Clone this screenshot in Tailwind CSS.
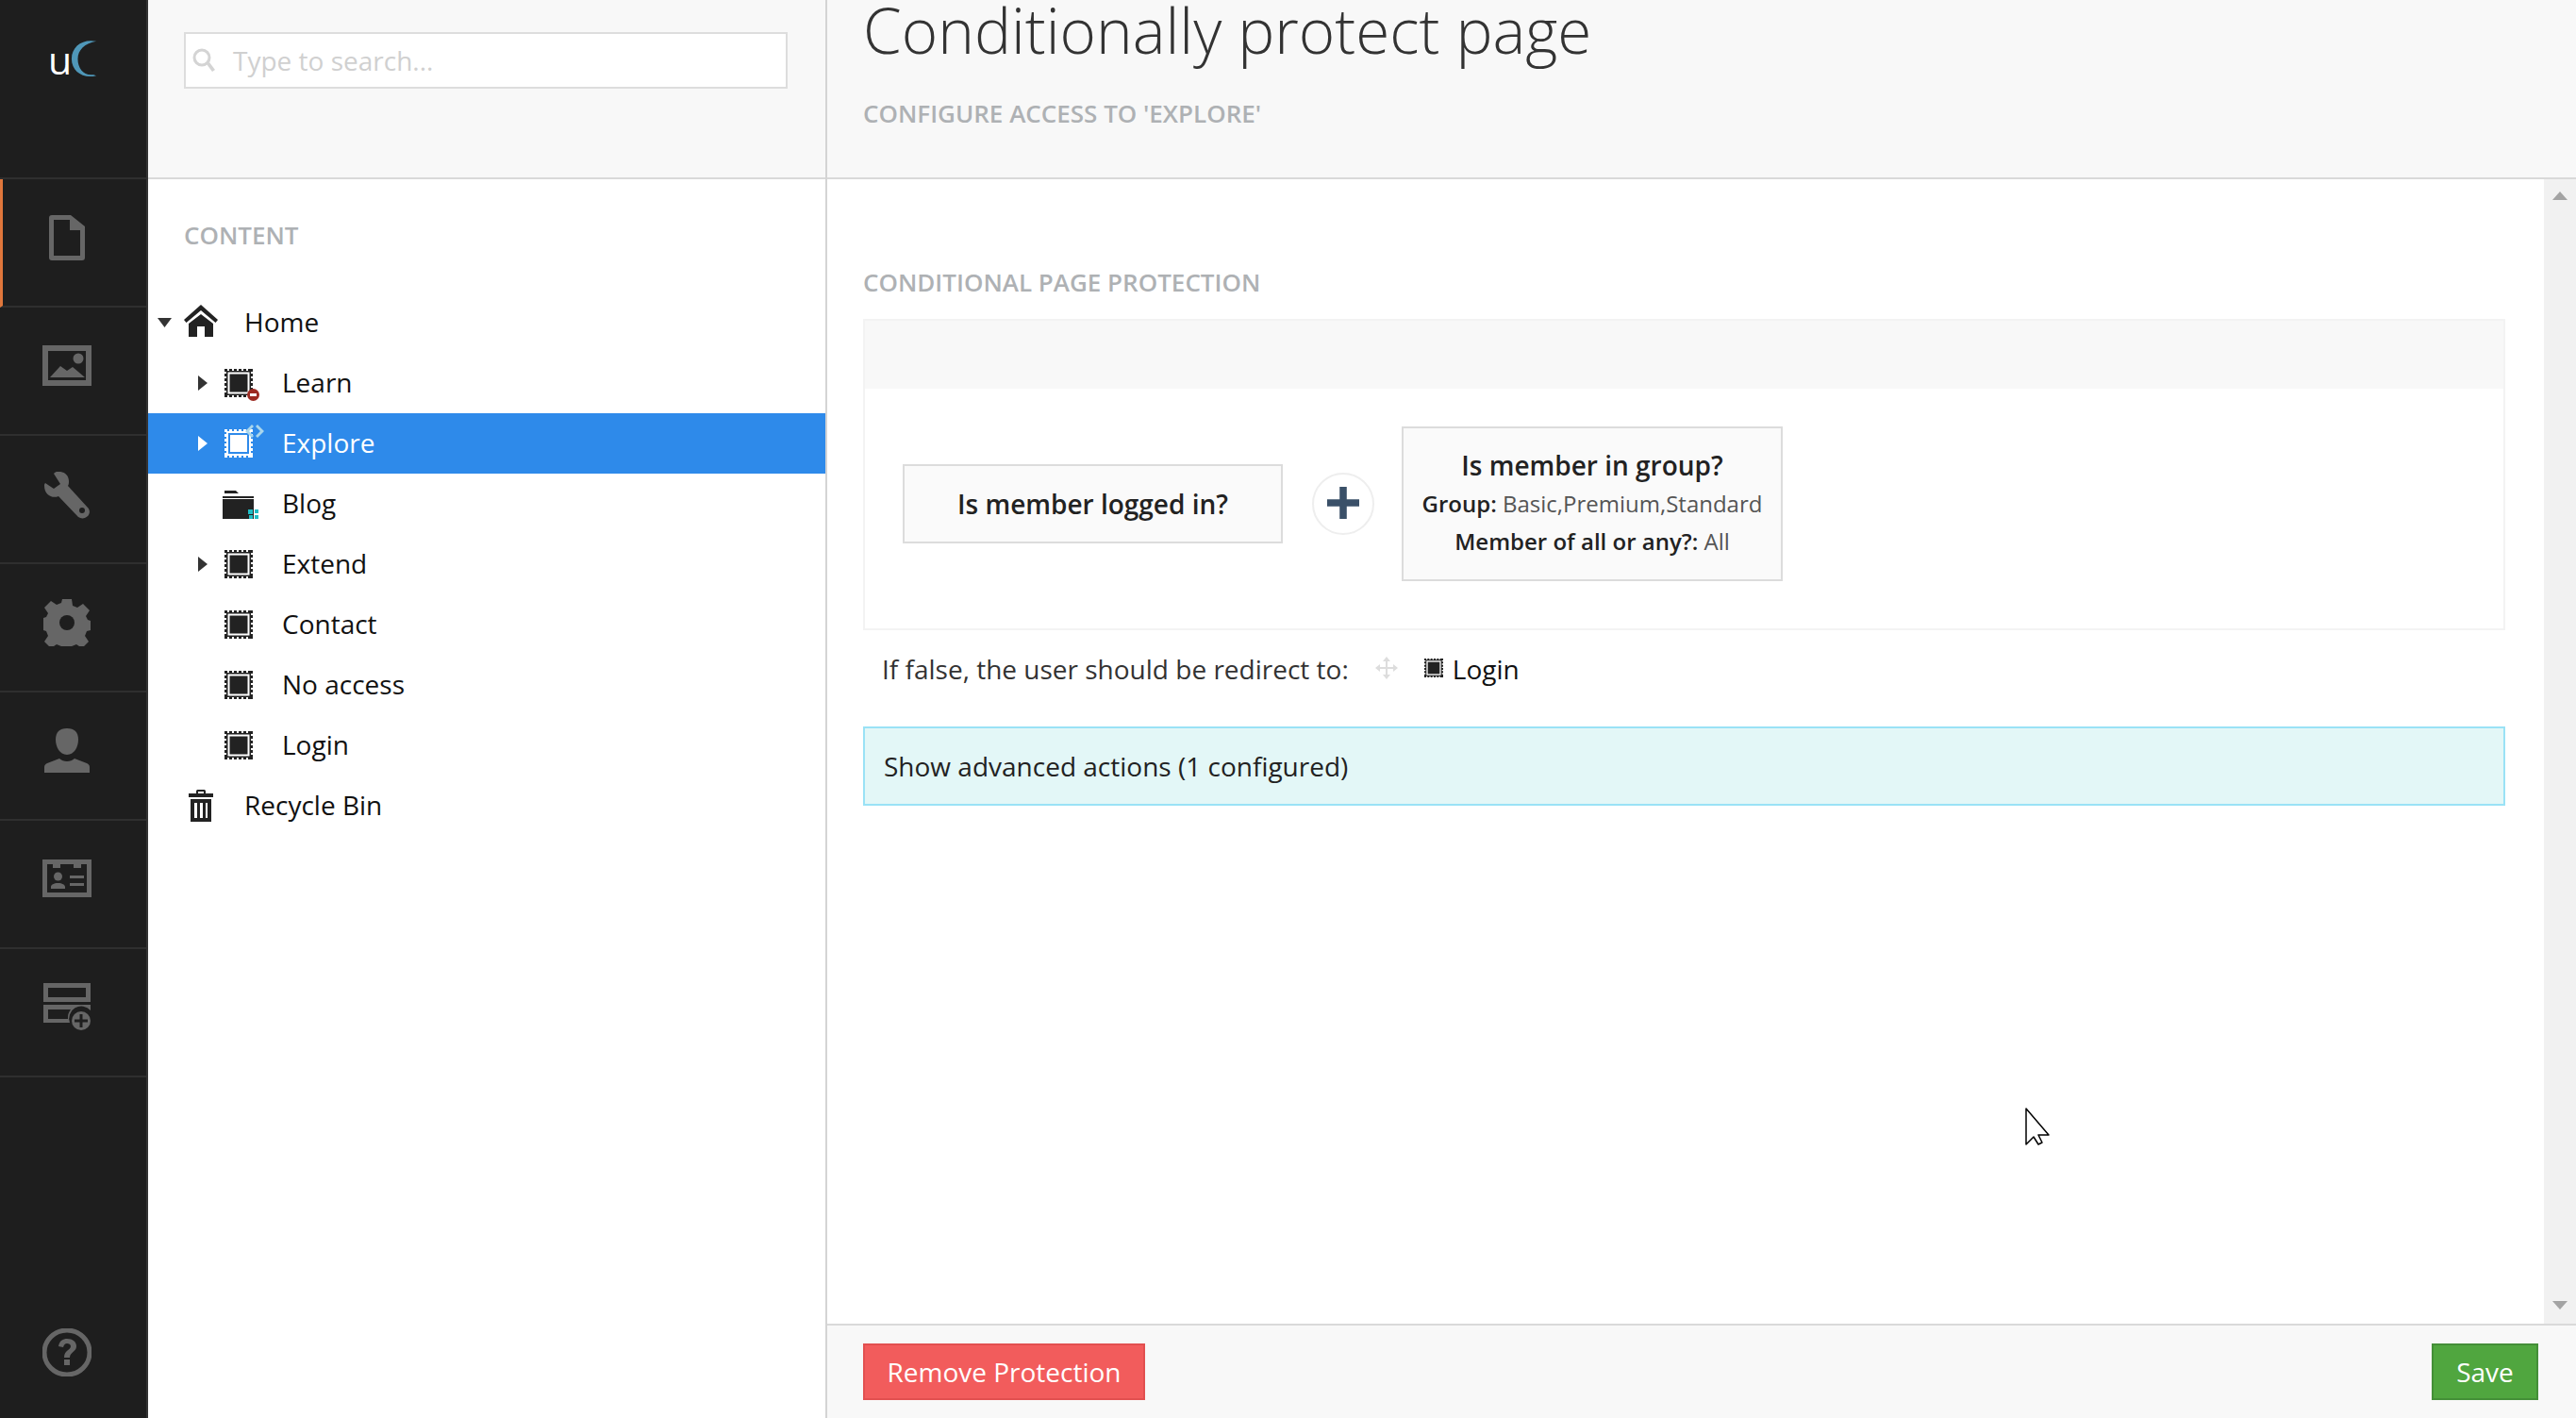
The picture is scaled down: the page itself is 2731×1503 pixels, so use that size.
<!DOCTYPE html>
<html lang="en">
  <head>
    <meta charset="UTF-8" />
    <title>Conditionally protect page</title>
    <script src="https://cdn.jsdelivr.net/npm/@tailwindcss/browser@4"></script>
  </head>
  <body class="h-screen overflow-hidden bg-white font-['Open_Sans',sans-serif] text-[#111]">
    <svg width="0" height="0" class="absolute">
      <defs>
        <symbol id="stamp" viewBox="0 0 30 30">
          <rect x="0" y="0" width="30" height="30" fill="#222" />
          <path d="M3 0h2v2H3zM8 0h2v2H8zM13 0h2v2h-2zM18 0h2v2h-2zM23 0h2v2h-2zM3 28h2v2H3zM8 28h2v2H8zM13 28h2v2h-2zM18 28h2v2h-2zM23 28h2v2h-2zM0 3h2v2H0zM0 8h2v2H0zM0 13h2v2H0zM0 18h2v2H0zM0 23h2v2H0zM28 3h2v2h-2zM28 8h2v2h-2zM28 13h2v2h-2zM28 18h2v2h-2zM28 23h2v2h-2z" fill="#fff" />
          <rect x="4.500" y="4.500" width="21" height="21" fill="#222" stroke="#fff" stroke-width="2" />
        </symbol>
        <symbol id="arrow" viewBox="0 0 10 16">
          <path d="M0 0l10 8-10 8z" fill="currentColor" />
        </symbol>
      </defs>
    </svg>

    <div class="flex h-full">
      <!-- Dark section nav -->
      <nav class="w-[157px] shrink-0 h-full flex flex-col bg-[#1e1e1e] border-r-2 border-[#333]">
        <div class="h-[190px] shrink-0 border-b-2 border-[#2f2f2f] pt-[41px] pl-[51px]">
          <div class="flex items-end">
            <span class="text-[41px] leading-[44px] text-white">u</span>
            <svg width="28" height="41" viewBox="0 0 30 42" class="mb-[2px] -ml-[1px]">
              <path d="M29 1C13 -2 1 7 1 21s13 23 28 19c-2-1-4-1-6-1C14 39 8 31 8 21 8 11 16 3 29 1z" fill="#4f97b8" />
            </svg>
          </div>
        </div>
        <div class="h-[136px] shrink-0 flex items-center justify-center border-l-[3px] border-l-[#e0773c] border-b-2 border-b-[#2f2f2f] pr-[16px] pb-[11px]">
          <svg width="40" height="50" viewBox="0 0 40 50">
            <path d="M4 1h20l15 12v33a3 3 0 0 1-3 3H4a3 3 0 0 1-3-3V4a3 3 0 0 1 3-3zm2 5v38h28V17H23V6z" fill="#666" fill-rule="evenodd" />
          </svg>
        </div>
        <div class="h-[136px] shrink-0 flex items-center justify-center border-b-2 border-[#2f2f2f] pr-[13px] pb-[11px]">
          <svg width="52" height="43" viewBox="0 0 52 43">
            <path d="M0 0h52v43H0zm6 6v31h40V6z" fill="#666" fill-rule="evenodd" />
            <circle cx="38" cy="14" r="5.500" fill="#666" />
            <path d="M8 34l11-12 7 5 6-4 13 11z" fill="#666" />
          </svg>
        </div>
        <div class="h-[136px] shrink-0 flex items-center justify-center border-b-2 border-[#2f2f2f] pr-[13px] pb-[8px]">
          <svg width="48" height="50" viewBox="0 0 48 50">
            <path d="M13 0c7-1 13 3 13 10 0 2 0 3-1 5l21 23c3 3 2 7 0 9-3 3-7 3-10 1L15 26c-7 3-15-2-15-11 0-1 0-2 1-3l9 6 7-5-7-11c1-1 2-2 3-2z" fill="#666" />
            <circle cx="40" cy="41" r="3" fill="#1e1e1e" />
          </svg>
        </div>
        <div class="h-[136px] shrink-0 flex items-center justify-center border-b-2 border-[#2f2f2f] pr-[13px] pb-[11px]">
          <svg width="50" height="50" viewBox="0 0 50 50">
            <path d="M20 0h10l1 7 5 2 6-4 7 7-4 6 2 4 3 1v10l-4 1-2 5 4 6-7 7-6-4-5 2-1 6H20l-1-6-5-2-6 4-7-7 4-6-2-5-3-1V20l3-1 2-4-4-6 7-7 6 4 5-2z" fill="#666" />
            <circle cx="25" cy="25" r="8" fill="#1e1e1e" />
          </svg>
        </div>
        <div class="h-[136px] shrink-0 flex items-center justify-center border-b-2 border-[#2f2f2f] pr-[13px] pb-[11px]">
          <svg width="48" height="47" viewBox="0 0 48 47">
            <path d="M24 0c8 0 12 4 12 12 0 7-4 16-12 16S12 19 12 12C12 4 16 0 24 0z" fill="#666" />
            <path d="M0 47v-6c0-2 1-3 3-4l13-5c4 4 12 4 16 0l13 5c2 1 3 2 3 4v6z" fill="#666" />
          </svg>
        </div>
        <div class="h-[136px] shrink-0 flex items-center justify-center border-b-2 border-[#2f2f2f] pr-[13px] pb-[12px]">
          <svg width="52" height="40" viewBox="0 0 52 40">
            <path d="M0 0h52v40H0zm5 5v30h42V5z" fill="#666" fill-rule="evenodd" />
            <path d="M11 4h8v5h-8zM33 4h8v5h-8z" fill="#666" />
            <circle cx="16.500" cy="18" r="4.500" fill="#666" />
            <path d="M9 31v-2c0-2 3-4 7.500-4s7.500 2 7.500 4v2zM29 17h15v3H29zM29 25h15v3H29z" fill="#666" />
          </svg>
        </div>
        <div class="h-[136px] shrink-0 flex items-center justify-center border-b-2 border-[#2f2f2f] pr-[13px] pb-[12px]">
          <svg width="50" height="50" viewBox="0 0 50 50">
            <path d="M0 0h50v20H0zm5 5v10h40V5zM0 23h50v6a13 13 0 0 0-22 13H0zm5 5v10h21a14 14 0 0 1 3-10z" fill="#666" fill-rule="evenodd" />
            <circle cx="40" cy="40" r="10" fill="#666" />
            <path d="M38.500 33h3v5.500H47v3h-5.500V47h-3v-5.500H33v-3h5.500z" fill="#1e1e1e" />
          </svg>
        </div>
        <div class="flex-1 flex items-end justify-center pb-[44px] pr-[13px]">
          <svg width="52" height="51" viewBox="0 0 52 51">
            <ellipse cx="26" cy="25.500" rx="24" ry="23.500" fill="none" stroke="#666" stroke-width="5" />
            <path d="M17 19c1-6 5-8 9-8 6 0 10 3 10 8 0 6-7 6-7 12h-6c0-8 7-8 7-12 0-2-2-3-4-3s-3 1-4 4z" fill="#666" />
            <rect x="23" y="33" width="6" height="6" fill="#666" />
          </svg>
        </div>
      </nav>

      <!-- Content tree -->
      <aside class="w-[718px] shrink-0 h-full flex flex-col">
        <div class="h-[190px] shrink-0 bg-[#f8f8f8] border-b-2 border-[#d9d9d9] pl-[38px] pr-[40px] pt-[34px]">
          <div class="h-[60px] bg-white border-2 border-[#ddd] flex items-center pl-[7px] gap-[17px]">
            <svg width="26" height="28" viewBox="0 0 26 28">
              <circle cx="10" cy="11" r="8" fill="none" stroke="#d4d4d4" stroke-width="3" />
              <path d="M15 18l3-2 6 8-3 2z" fill="#d4d4d4" />
            </svg>
            <span class="text-[28px] text-[#d0d0d0] mb-[1px]">Type to search...</span>
          </div>
        </div>
        <div class="pt-[40px]">
          <div class="pl-[38px] h-[47px] text-[26px] font-semibold text-[#aeb1b4]">CONTENT</div>
          <ul class="mt-[33px] text-[28px]">
            <li class="h-[64px] flex items-center">
              <svg width="15" height="10" viewBox="0 0 15 10" class="ml-[10px] text-[#333]"><path d="M0 0h15L7.500 10z" fill="currentColor" /></svg>
              <svg width="36" height="34" viewBox="0 0 36 34" class="ml-[13px] mb-[4px]">
                <path d="M18 0l18 16-2.500 3L18 6 2.500 19 0 16z" fill="#222" />
                <path d="M18 10l13 10v14H22V23h-8v11H5V20z" fill="#222" />
              </svg>
              <span class="ml-[28px] mb-[2px]">Home</span>
            </li>
            <li class="h-[64px] flex items-center pl-[53px]">
              <svg width="10" height="16" class="text-[#333]"><use href="#arrow" /></svg>
              <span class="relative ml-[18px]">
                <svg width="30" height="30" class="block"><use href="#stamp" /></svg>
                <svg width="13" height="13" viewBox="0 0 13 13" class="absolute -right-[7px] -bottom-[4px]">
                  <circle cx="6.500" cy="6.500" r="6.500" fill="#9c2b22" />
                  <rect x="3" y="5" width="7" height="3" fill="#fff" />
                </svg>
              </span>
              <span class="ml-[31px] mb-[2px]">Learn</span>
            </li>
            <li class="h-[64px] flex items-center pl-[53px] bg-[#2e8aea] text-white">
              <svg width="10" height="16"><use href="#arrow" /></svg>
              <span class="relative ml-[18px]">
                <svg width="30" height="30" viewBox="0 0 30 30" class="block">
                  <rect width="30" height="30" fill="#fff" />
                  <path d="M3 0h2v2H3zM8 0h2v2H8zM13 0h2v2h-2zM18 0h2v2h-2zM23 0h2v2h-2zM3 28h2v2H3zM8 28h2v2H8zM13 28h2v2h-2zM18 28h2v2h-2zM23 28h2v2h-2zM0 3h2v2H0zM0 8h2v2H0zM0 13h2v2H0zM0 18h2v2H0zM0 23h2v2H0zM28 3h2v2h-2zM28 8h2v2h-2zM28 13h2v2h-2zM28 18h2v2h-2zM28 23h2v2h-2z" fill="#2e8aea" />
                  <rect x="5" y="5" width="20" height="20" fill="#fff" stroke="#2e8aea" stroke-width="2" />
                </svg>
                <svg width="20" height="14" viewBox="0 0 20 14" class="absolute -right-[12px] -top-[5px]">
                  <path d="M7 0l2 2-5 5 5 5-2 2-7-7zM13 0l7 7-7 7-2-2 5-5-5-5z" fill="#a9d6ec" />
                </svg>
              </span>
              <span class="ml-[31px] mb-[2px]">Explore</span>
            </li>
            <li class="h-[64px] flex items-center pl-[79px]">
              <svg width="38" height="32" viewBox="0 0 38 32">
                <path d="M0 8h33v2H0zM2 2h12l3 3H2zM0 11h33v25H0z" fill="#222" />
                <path d="M27 22h5v5h-5zM34 22h4v4h-4zM28 28h4v4h-4zM34 28h4v4h-4z" fill="#1fbcc4" />
              </svg>
              <span class="ml-[25px] mb-[2px]">Blog</span>
            </li>
            <li class="h-[64px] flex items-center pl-[53px]">
              <svg width="10" height="16" class="text-[#333]"><use href="#arrow" /></svg>
              <svg width="30" height="30" class="ml-[18px]"><use href="#stamp" /></svg>
              <span class="ml-[31px] mb-[2px]">Extend</span>
            </li>
            <li class="h-[64px] flex items-center pl-[81px]">
              <svg width="30" height="30"><use href="#stamp" /></svg>
              <span class="ml-[31px] mb-[2px]">Contact</span>
            </li>
            <li class="h-[64px] flex items-center pl-[81px]">
              <svg width="30" height="30"><use href="#stamp" /></svg>
              <span class="ml-[31px] mb-[2px]">No access</span>
            </li>
            <li class="h-[64px] flex items-center pl-[81px]">
              <svg width="30" height="30"><use href="#stamp" /></svg>
              <span class="ml-[31px] mb-[2px]">Login</span>
            </li>
            <li class="h-[64px] flex items-center pl-[43px]">
              <svg width="26" height="34" viewBox="0 0 26 34">
                <path d="M8 4V1.500C8 .500 9 0 10 0h6c1 0 2 .500 2 1.500V4h8v4H0V4zm2 0h6V2h-6zM2 10h22v24H2zm4 4v16h3V14zm6 0v16h3V14zm6 0v16h2V14z" fill="#222" fill-rule="evenodd" />
              </svg>
              <span class="ml-[33px] mb-[2px]">Recycle Bin</span>
            </li>
          </ul>
        </div>
      </aside>

      <!-- Editor -->
      <main class="flex-1 min-w-0 h-full flex flex-col border-l-2 border-[#d4d4d4]">
        <header class="h-[190px] shrink-0 bg-[#f8f8f8] border-b-2 border-[#d9d9d9] pl-[38px] overflow-hidden">
          <h1 class="text-[65.6px] leading-[64px] text-[#333] font-light">Conditionally protect page</h1>
          <p class="mt-[40px] text-[26px] leading-[32px] font-semibold text-[#aeb1b4]">CONFIGURE ACCESS TO 'EXPLORE'</p>
        </header>

        <div class="flex-1 min-h-0 flex">
          <div class="flex-1 min-w-0 pl-[38px] pr-[41px] pt-[93px]">
            <h2 class="h-[55px] text-[26px] leading-[32px] font-semibold text-[#aeb1b4]">CONDITIONAL PAGE PROTECTION</h2>
            <div class="border-2 border-[#f3f3f3]">
              <div class="h-[72px] bg-[#f8f8f8]"></div>
              <div class="h-[254px] flex items-center pl-[40px] pb-[10px]">
                <div class="w-[403px] h-[84px] border-2 border-[#dcdcdc] bg-[#fafafa] flex items-center justify-center text-[28px] font-semibold text-[#222]"><span class="mb-[1px]">Is member logged in?</span></div>
                <div class="w-[66px] h-[66px] ml-[31px] rounded-full border-2 border-[#eee] bg-white flex items-center justify-center">
                  <svg width="36" height="34" viewBox="0 0 36 36" class="mb-[3px]"><path d="M14 0h8v14h14v8H22v14h-8V22H0v-8h14z" fill="#3a5068" /></svg>
                </div>
                <div class="w-[404px] h-[164px] ml-[29px] border-2 border-[#dcdcdc] bg-[#fafafa] flex flex-col items-center justify-center text-[24px] text-[#555] pb-[2px]">
                  <div class="text-[28px] leading-[40px] font-semibold text-[#222]">Is member in group?</div>
                  <div class="leading-[40px] mt-[1px]"><b class="font-semibold text-[#222]">Group:</b> Basic,Premium,Standard</div>
                  <div class="leading-[40px]"><b class="font-semibold text-[#222]">Member of all or any?:</b> All</div>
                </div>
              </div>
            </div>
            <div class="h-[83px] flex items-center pl-[20px] text-[28px] text-[#333]">
              <span class="mb-[1px]">If false, the user should be redirect to:</span>
              <svg width="24" height="24" viewBox="0 0 24 24" class="ml-[28px] mb-[3px]">
                <path d="M12 0l4 5h-3v6h6V8l5 4-5 4v-3h-6v6h3l-4 5-4-5h3v-6H5v3l-5-4 5-4v3h6V5H8z" fill="#ddd" />
              </svg>
              <svg width="20" height="20" class="ml-[28px] mb-[3px]"><use href="#stamp" /></svg>
              <span class="ml-[10px] mb-[1px] text-[#111]">Login</span>
            </div>
            <div class="mt-[19px] h-[84px] border-2 border-[#9ae2f6] bg-[#e3f7f7] flex items-center pl-[20px] text-[28px] text-[#222]"><span class="mb-[1px]">Show advanced actions (1 configured)</span></div>
          </div>
          <div class="w-[34px] shrink-0 bg-[#f1f1f1] flex flex-col items-center justify-between pt-[13px] pb-[15px]">
            <svg width="16" height="9" viewBox="0 0 16 9"><path d="M8 0l8 9H0z" fill="#a3a3a3" /></svg>
            <svg width="16" height="9" viewBox="0 0 16 9"><path d="M0 0h16L8 9z" fill="#a3a3a3" /></svg>
          </div>
        </div>

        <footer class="h-[100px] shrink-0 bg-[#f8f8f8] border-t-2 border-[#d9d9d9] flex items-center justify-between pl-[38px] pr-[40px]">
          <button class="h-[60px] w-[299px] border-2 border-[#e25050] bg-[#f25c5c] text-white text-[28px] pb-[1px]">Remove Protection</button>
          <button class="h-[60px] w-[113px] border-2 border-[#448f38] bg-[#50a63f] text-white text-[28px] pb-[1px]">Save</button>
        </footer>
      </main>
    </div>

    <!-- Mouse pointer from the capture -->
    <svg width="26" height="40" viewBox="0 0 26 40" class="absolute left-[2147px] top-[1174px]">
      <path d="M1 1v38l8-8 5 8 4-2-4-8h11z" fill="#fff" stroke="#000" stroke-width="1.500" stroke-linejoin="round" />
    </svg>
  </body>
</html>
